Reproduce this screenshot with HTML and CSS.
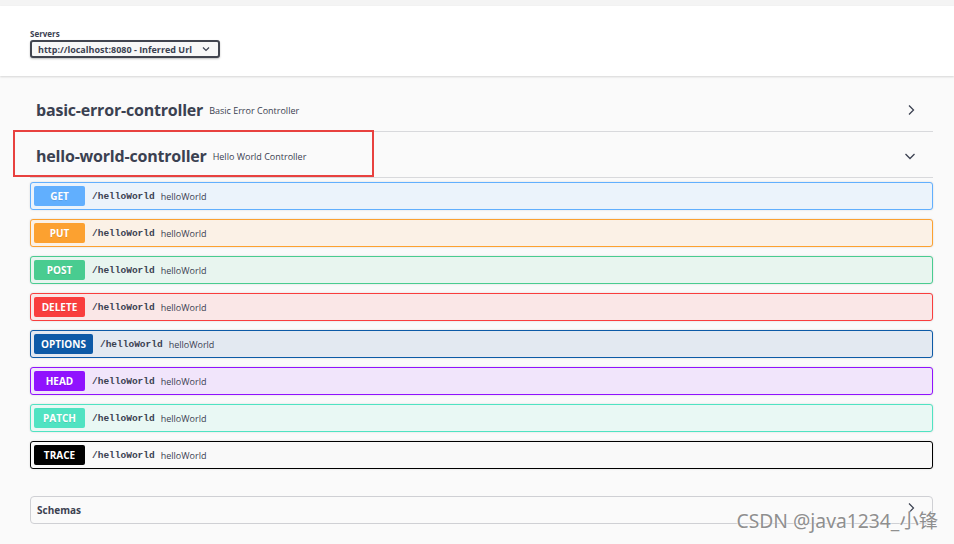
FILE: index.html
```html
<!DOCTYPE html>
<html>
<head>
<meta charset="utf-8">
<link rel="stylesheet" href="styles.css">
</head>
<body>
<div class="topstrip"></div>
<div class="scheme">
  <div class="servers">
    <div class="servers-label">Servers</div>
    <div class="select">
      <span>http://localhost:8080 - Inferred Url</span>
      <svg class="sel-arrow" width="8" height="6" viewBox="0 0 8 6"><path d="M1 1.5 L4 4.5 L7 1.5" fill="none" stroke="#3b4151" stroke-width="1.2"/></svg>
    </div>
  </div>
</div>
<div class="content">
  <div class="tag">
    <div class="tag-title">basic-error-controller</div>
    <div class="tag-desc">Basic Error Controller</div>
    <svg class="chev" width="10" height="12" viewBox="0 0 10 12"><path d="M3 1.5 L7.5 6 L3 10.5" fill="none" stroke="#3b4151" stroke-width="1.3"/></svg>
  </div>
  <div class="tag tag-open">
    <div class="tag-title">hello-world-controller</div>
    <div class="tag-desc">Hello World Controller</div>
    <svg class="chev" width="12" height="10" viewBox="0 0 12 10"><path d="M1.5 3 L6 7.5 L10.5 3" fill="none" stroke="#3b4151" stroke-width="1.3"/></svg>
    <div class="highlight"></div>
  </div>
  <div class="ops">
    <div class="op op-get"><span class="method">GET</span><span class="path">/helloWorld</span><span class="summary">helloWorld</span></div>
    <div class="op op-put"><span class="method">PUT</span><span class="path">/helloWorld</span><span class="summary">helloWorld</span></div>
    <div class="op op-post"><span class="method">POST</span><span class="path">/helloWorld</span><span class="summary">helloWorld</span></div>
    <div class="op op-delete"><span class="method">DELETE</span><span class="path">/helloWorld</span><span class="summary">helloWorld</span></div>
    <div class="op op-options"><span class="method">OPTIONS</span><span class="path">/helloWorld</span><span class="summary">helloWorld</span></div>
    <div class="op op-head"><span class="method">HEAD</span><span class="path">/helloWorld</span><span class="summary">helloWorld</span></div>
    <div class="op op-patch"><span class="method">PATCH</span><span class="path">/helloWorld</span><span class="summary">helloWorld</span></div>
    <div class="op op-trace"><span class="method">TRACE</span><span class="path">/helloWorld</span><span class="summary">helloWorld</span></div>
  </div>
  <div class="schemas">
    <span class="schemas-title">Schemas</span>
    <svg class="schemas-chev" width="10" height="12" viewBox="0 0 10 12"><path d="M3 1.5 L7.5 6 L3 10.5" fill="none" stroke="#3b4151" stroke-width="1.2"/></svg>
    <div class="watermark">CSDN @java1234_小锋</div>
  </div>
</div>
</body>
</html>
```
FILE: styles.css
```css
html, body {
  margin: 0;
  padding: 0;
}
body {
  background: #fafafa;
  font-family: "Open Sans", "Noto Sans", sans-serif;
  color: #3b4151;
  width: 954px;
  height: 544px;
  overflow: hidden;
}
.topstrip {
  height: 6px;
  background: #f4f4f4;
}
.scheme {
  height: 70px;
  background: #fff;
  box-shadow: 0 1px 2px rgba(0, 0, 0, 0.15);
  padding: 0 30px;
  box-sizing: border-box;
  display: flex;
  align-items: flex-start;
}
.servers {
  margin-top: 22px;
}
.servers-label {
  font-size: 8px;
  font-weight: 700;
  line-height: 11px;
  color: #3b4151;
}
.select {
  margin-top: 1px;
  width: 190px;
  height: 18px;
  box-sizing: border-box;
  border: 2px solid #41444e;
  border-radius: 3px;
  box-shadow: 0 1px 2px rgba(0, 0, 0, 0.25);
  display: flex;
  align-items: center;
  padding: 0 0 0 6px;
  font-size: 9px;
  font-weight: 700;
  color: #3b4151;
  background: #f7f7f7;
}
.sel-arrow {
  margin-left: 10px;
}
.content {
  padding: 10px 21px 0 30px;
}
.tag {
  position: relative;
  height: 46px;
  border-bottom: 1px solid #d8d9dc;
  display: flex;
  align-items: center;
  padding-left: 6px;
  padding-top: 3px;
  box-sizing: border-box;
}
.tag-title {
  font-size: 16px;
  font-weight: 700;
  letter-spacing: -0.2px;
  color: #3b4151;
}
.tag-desc {
  font-size: 9px;
  margin-left: 6px;
  padding-top: 1px;
  color: #3b4151;
}
.chev {
  margin-left: auto;
  margin-right: 17px;
}
.highlight {
  position: absolute;
  left: -17px;
  top: -2px;
  width: 361px;
  height: 47px;
  box-sizing: border-box;
  border: 2px solid #e8413f;
  pointer-events: none;
}
.ops {
  padding-top: 4px;
  display: flex;
  flex-direction: column;
  gap: 9px;
}
.op {
  height: 28px;
  box-sizing: border-box;
  border: 1px solid;
  border-radius: 3px;
  box-shadow: 0 0 2px rgba(0, 0, 0, 0.15);
  display: flex;
  align-items: center;
  padding: 0 3px;
}
.method {
  min-width: 51px;
  height: 20px;
  padding: 0 7px;
  box-sizing: border-box;
  border-radius: 2px;
  color: #fff;
  font-size: 10px;
  font-weight: 700;
  display: flex;
  align-items: center;
  justify-content: center;
  text-shadow: 0 1px 0 rgba(0, 0, 0, 0.1);
}
.path {
  margin-left: 7px;
  font-family: "Liberation Mono", "DejaVu Sans Mono", monospace;
  font-size: 9.5px;
  font-weight: 700;
  color: #3b4151;
}
.summary {
  margin-left: 6px;
  font-size: 9px;
  color: #3b4151;
}
.op-get { border-color: #61affe; background: #ebf3fb; }
.op-get .method { background: #61affe; }
.op-put { border-color: #fca130; background: #fbf1e6; }
.op-put .method { background: #fca130; }
.op-post { border-color: #49cc90; background: #e8f5ef; }
.op-post .method { background: #49cc90; }
.op-delete { border-color: #f93e3e; background: #fae7e7; }
.op-delete .method { background: #f93e3e; }
.op-options { border-color: #0d5aa7; background: #e3e9f1; }
.op-options .method { background: #0d5aa7; }
.op-head { border-color: #9012fe; background: #f1e5fb; }
.op-head .method { background: #9012fe; }
.op-patch { border-color: #50e3c2; background: #e9f8f4; }
.op-patch .method { background: #50e3c2; }
.op-trace { border-color: #000; background: #f9f9f9; }
.op-trace .method { background: #000; }
.schemas {
  position: relative;
  margin-top: 27px;
  height: 28px;
  box-sizing: border-box;
  border: 1px solid #cfd0d4;
  border-radius: 4px;
  display: flex;
  align-items: center;
  padding-left: 6px;
}
.schemas-title {
  font-size: 10px;
  font-weight: 700;
  color: #3b4151;
}
.schemas-chev {
  margin-left: auto;
  margin-right: 16px;
  margin-top: -4px;
}
.watermark {
  position: absolute;
  right: -6px;
  top: 13px;
  font-family: "Noto Sans", "Noto Sans CJK SC", sans-serif;
  font-size: 19.3px;
  line-height: 22px;
  color: #8f8f8f;
  text-shadow: 0 0 2px #fff, 0 0 2px #fff;
  white-space: nowrap;
}
```
